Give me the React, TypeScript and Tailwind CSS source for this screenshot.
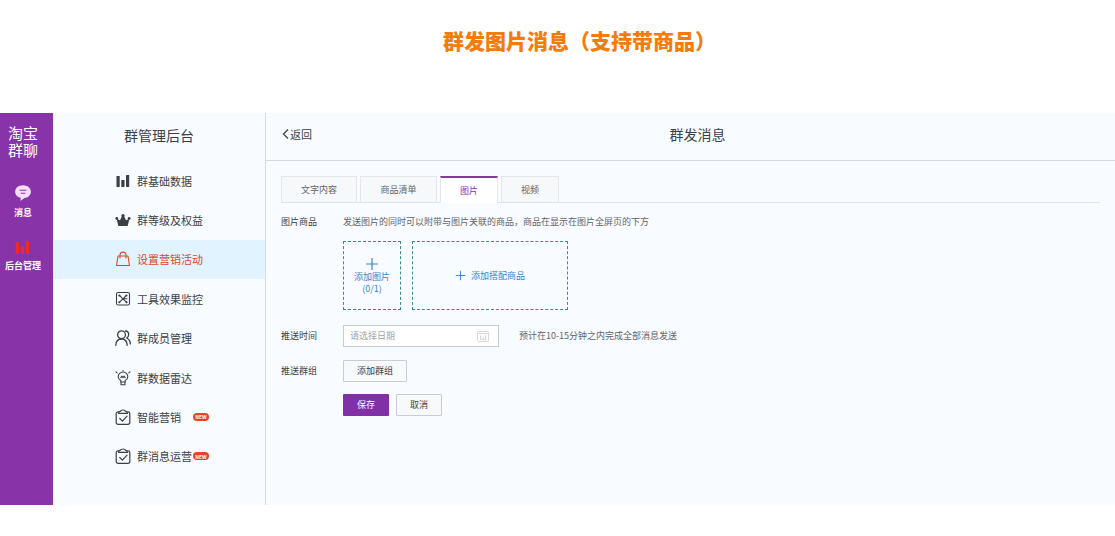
import type { ReactNode } from "react";

const line = {
  viewBox: "0 0 16 16",
  fill: "none",
  stroke: "currentColor",
  strokeWidth: 1.1,
  strokeLinecap: "round" as const,
  strokeLinejoin: "round" as const,
  "aria-hidden": true,
};

function BarsIcon({ className }: { className: string }) {
  return (
    <svg viewBox="0 0 16 16" fill="currentColor" className={className} aria-hidden="true">
      <rect x="1.500" y="3" width="3.200" height="11" rx="0.4" />
      <rect x="6.300" y="7" width="3.200" height="7" rx="0.4" />
      <rect x="11" y="2" width="3.200" height="12" rx="0.4" />
    </svg>
  );
}

function CrownIcon() {
  return (
    <svg viewBox="0 0 16 16" fill="currentColor" className="size-4" aria-hidden="true">
      <path d="M3.200 13.400 1.600 6.800 5 8.200 7 4h2l2 4.200 3.400-1.400-1.600 6.600a1 1 0 0 1-.9.600H4.100a1 1 0 0 1-.9-.600Z" />
      <circle cx="8" cy="3.500" r="1.600" />
      <circle cx="1.800" cy="6.400" r="1.400" />
      <circle cx="14.200" cy="6.400" r="1.400" />
    </svg>
  );
}

function BagIcon() {
  return (
    <svg {...line} className="size-4">
      <path d="M3 5h10l1.500 9.500h-13L3 5Z" />
      <path d="M5 7V4.200C5 2.400 6.200 1.100 8 1.100s3 1.300 3 3.100V7" />
    </svg>
  );
}

function MonitorIcon() {
  return (
    <svg {...line} className="size-4">
      <rect x="1.500" y="1.500" width="13" height="12.500" rx="1.800" />
      <path d="m4.500 4.500 3.500 3.300 3.200-3.300M8 7.800l-3.500 3.400M8 7.800l3.400 3.400M8 7.800h4" />
      <circle cx="4.300" cy="4.500" r="0.500" />
      <circle cx="11.500" cy="4.500" r="0.500" />
      <circle cx="4.300" cy="11.200" r="0.500" />
      <circle cx="11.600" cy="11.200" r="0.500" />
    </svg>
  );
}

function MembersIcon() {
  return (
    <svg {...line} strokeWidth={1.3} className="size-4">
      <circle cx="6.500" cy="4.800" r="3.900" />
      <path d="M.8 15.300c.2-3.800 2.300-6.300 5.700-6.300s5.500 2.500 5.700 6.300" />
      <path d="M10.400 1c2 .1 3.300 1.600 3.300 3.600 0 1.600-.8 2.800-2.100 3.400 2.300.9 3.600 2.900 3.800 5.900" />
    </svg>
  );
}

function BulbIcon() {
  return (
    <svg {...line} className="size-4">
      <path d="M5.800 12v-1.400C4.300 9.900 3.200 8.600 3.200 6.800a4.800 4.800 0 0 1 9.600 0c0 1.800-1.100 3.100-2.600 3.800V12Z" />
      <path d="M6 12v2.800h4V12M5.800 7.600l1.100-1.400L8 7.600l1.100-1.400 1.100 1.400M8 .4v.6M1 1.800l1.200 1M15 1.800l-1.200 1" />
    </svg>
  );
}

function ClipboardIcon() {
  return (
    <svg {...line} strokeWidth={1.2} className="size-4">
      <path d="M3.600 2.800H3a1.800 1.800 0 0 0-1.800 1.800v8.900a1.800 1.800 0 0 0 1.800 1.800h10a1.800 1.800 0 0 0 1.800-1.800V4.600A1.800 1.800 0 0 0 13 2.800h-.6" />
      <path d="M3.600 4.400c0-1.500.8-2 1.900-2.200.5-1.600 4.500-1.600 5 0 1.100.2 1.900.7 1.900 2.200Z" />
      <path d="m4.800 9.500 2.600 2.600 4.600-5" />
    </svg>
  );
}

function PlusIcon({ className }: { className: string }) {
  return (
    <svg viewBox="0 0 14 14" fill="none" stroke="currentColor" strokeWidth="1.2" className={className} aria-hidden="true">
      <path d="M7 1v12M1 7h12" />
    </svg>
  );
}

function CalendarIcon() {
  return (
    <svg viewBox="0 0 14 14" fill="none" stroke="currentColor" className="size-[14px] shrink-0 text-[#d8d8dc]" aria-hidden="true">
      <rect x="1.500" y="2.500" width="11" height="10" rx="1" />
      <path d="M1.500 4.500h11M4 1.500v2M10 1.500v2M4.500 6.500v4M7 7.500v3M9.500 6.500v4M4 10.500h6" />
    </svg>
  );
}

type MenuItem = { label: string; icon: ReactNode; active?: boolean; isNew?: boolean };

const menu: MenuItem[] = [
  { label: "群基础数据", icon: <BarsIcon className="size-4" /> },
  { label: "群等级及权益", icon: <CrownIcon /> },
  { label: "设置营销活动", icon: <BagIcon />, active: true },
  { label: "工具效果监控", icon: <MonitorIcon /> },
  { label: "群成员管理", icon: <MembersIcon /> },
  { label: "群数据雷达", icon: <BulbIcon /> },
  { label: "智能营销", icon: <ClipboardIcon />, isNew: true },
  { label: "群消息运营", icon: <ClipboardIcon />, isNew: true },
];

const tabs = [
  { label: "文字内容", width: "w-[76px]" },
  { label: "商品清单", width: "w-[77px]" },
  { label: "图片", width: "w-[58px]", active: true },
  { label: "视频", width: "w-[58px]" },
];

function Rail() {
  return (
    <nav aria-label="淘宝群聊" className="flex w-[53px] shrink-0 flex-col items-center bg-[#8833a8] pt-[11px] pr-[7px] text-white">
      <div className="w-[30px] text-[15px] leading-[17px]">淘宝群聊</div>
      <a href="#messages" className="mt-[26px] flex flex-col items-center gap-[3px] text-[9px] leading-4 font-bold">
        <svg viewBox="0 0 16 16" className="size-[18px]" aria-hidden="true">
          <path fill="#f5dcfb" d="M8 1c4 0 7 2.500 7 5.800 0 3-2.300 5.200-5.700 5.700-1 .9-2.300 1.900-3.900 2.400.5-.8.7-1.700.6-2.600C3.100 11.500 1 9.500 1 6.800 1 3.500 4 1 8 1Z" />
          <path stroke="#8833a8" strokeWidth="1" d="M5 5.500h6M6 8.200h4" />
        </svg>
        消息
      </a>
      <a href="#admin" className="mt-[18px] flex flex-col items-center gap-[2px] text-[9px] leading-4 font-bold">
        <BarsIcon className="size-[17px] text-[#ee2c1f]" />
        后台管理
      </a>
    </nav>
  );
}

function SideMenu() {
  return (
    <aside className="w-[213px] shrink-0 border-r border-[#d5dbe4]">
      <h2 className="flex h-12 items-center justify-center pb-1 text-[14px] leading-5">群管理后台</h2>
      <ul className="grid h-[315px] auto-rows-fr">
        {menu.map((item) => (
          <li key={item.label} className={item.active ? "bg-[#e1f3fe] text-[#d8492d]" : ""}>
            <a href="#menu" className="flex h-full items-center pl-[62px] text-[11px] leading-4">
              {item.icon}
              <span className="ml-[6px] min-w-[55px]">{item.label}</span>
              {item.isNew && (
                <span className="ml-px flex h-2 w-4 items-center justify-center rounded-full bg-[#e8432a] text-[5px] leading-none font-bold text-white">
                  NEW
                </span>
              )}
            </a>
          </li>
        ))}
      </ul>
    </aside>
  );
}

const outlined = "h-[22px] rounded-[1px] border border-[#c9ccd4] bg-[#f8f9fb]";

function MessageForm() {
  return (
    <form className="grid grid-cols-[62px_1fr] pt-[11px] text-[9px] leading-4">
      <span>图片商品</span>
      <p className="text-[#62656c]">发送图片的同时可以附带与图片关联的商品，商品在显示在图片全屏页的下方</p>

      <div className="col-start-2 mt-[11px] flex gap-[11px] text-[#3a83cf]">
        <button type="button" className="flex h-[69px] w-[58px] flex-col items-center justify-center border border-dashed border-[#3f8a8d] leading-3">
          <PlusIcon className="size-[14px]" />
          <span>添加图片</span>
          <span>(0/1)</span>
        </button>
        <button type="button" className="flex h-[69px] w-[156px] items-center justify-center gap-[5px] border border-dashed border-[#3f8a8d]">
          <PlusIcon className="size-[11px]" />
          添加搭配商品
        </button>
      </div>

      <label htmlFor="push-date" className="mt-[15px] self-center">推送时间</label>
      <div className="mt-[15px] flex items-center gap-5">
        <div className="flex h-[22px] w-[156px] items-center border border-[#c9ccd4] bg-white pr-2 pl-[6px]">
          <input id="push-date" type="text" placeholder="请选择日期" className="min-w-0 flex-1 bg-transparent outline-none placeholder:text-[#a3a3a6]" />
          <CalendarIcon />
        </div>
        <span className="text-[#62656c]">预计在10-15分钟之内完成全部消息发送</span>
      </div>

      <span className="mt-[13px] self-center">推送群组</span>
      <div className="mt-[13px] flex">
        <button type="button" className={`${outlined} w-16`}>添加群组</button>
      </div>

      <div className="col-start-2 mt-3 flex gap-[7px]">
        <button type="submit" className="h-[22px] w-[46px] rounded-[1px] bg-[#8230a5] text-white">保存</button>
        <button type="button" className={`${outlined} w-[46px]`}>取消</button>
      </div>
    </form>
  );
}

export default function App() {
  return (
    <div className="min-h-screen bg-white pb-[31px] font-['Noto_Sans_CJK_SC','Noto_Sans',sans-serif] text-[#3b3f47]">
      <h1 className="flex h-[113px] justify-center pt-6 pl-11 text-[21px] leading-8 font-black text-[#f57c0c]">
        群发图片消息（支持带商品）
      </h1>
      <div className="flex min-h-[392px] bg-[#f8fbff]">
        <Rail />
        <SideMenu />
        <main className="min-w-0 flex-1">
          <header className="grid h-12 grid-cols-[1fr_auto_1fr] items-center border-b border-[#d5dbe4] px-4 pb-[5px]">
            <a href="#back" className="flex items-center gap-px text-[11px] leading-4">
              <svg viewBox="0 0 7 10" fill="none" stroke="currentColor" strokeWidth="1.200" className="h-[10px] w-[7px]" aria-hidden="true">
                <path d="M6 .5 1.500 5 6 9.500" />
              </svg>
              返回
            </a>
            <h2 className="pl-[14px] text-[14px] leading-5">群发消息</h2>
          </header>
          <div className="px-[15px] pt-[15px]">
            <div role="tablist" className="flex h-[27px] gap-[3px] border-b border-[#dfe3e9] text-[9px] leading-4">
              {tabs.map((tab) => (
                <button
                  key={tab.label}
                  type="button"
                  role="tab"
                  aria-selected={Boolean(tab.active)}
                  className={`${tab.width} ${
                    tab.active
                      ? "-mb-px border-x border-t-2 border-x-[#e3e6eb] border-t-[#7f3f92] bg-white text-[#8833a8]"
                      : "border-x border-t border-[#e3e6eb] bg-[#f6f8fa] text-[#62656c]"
                  }`}
                >
                  {tab.label}
                </button>
              ))}
            </div>
            <MessageForm />
          </div>
        </main>
      </div>
    </div>
  );
}
